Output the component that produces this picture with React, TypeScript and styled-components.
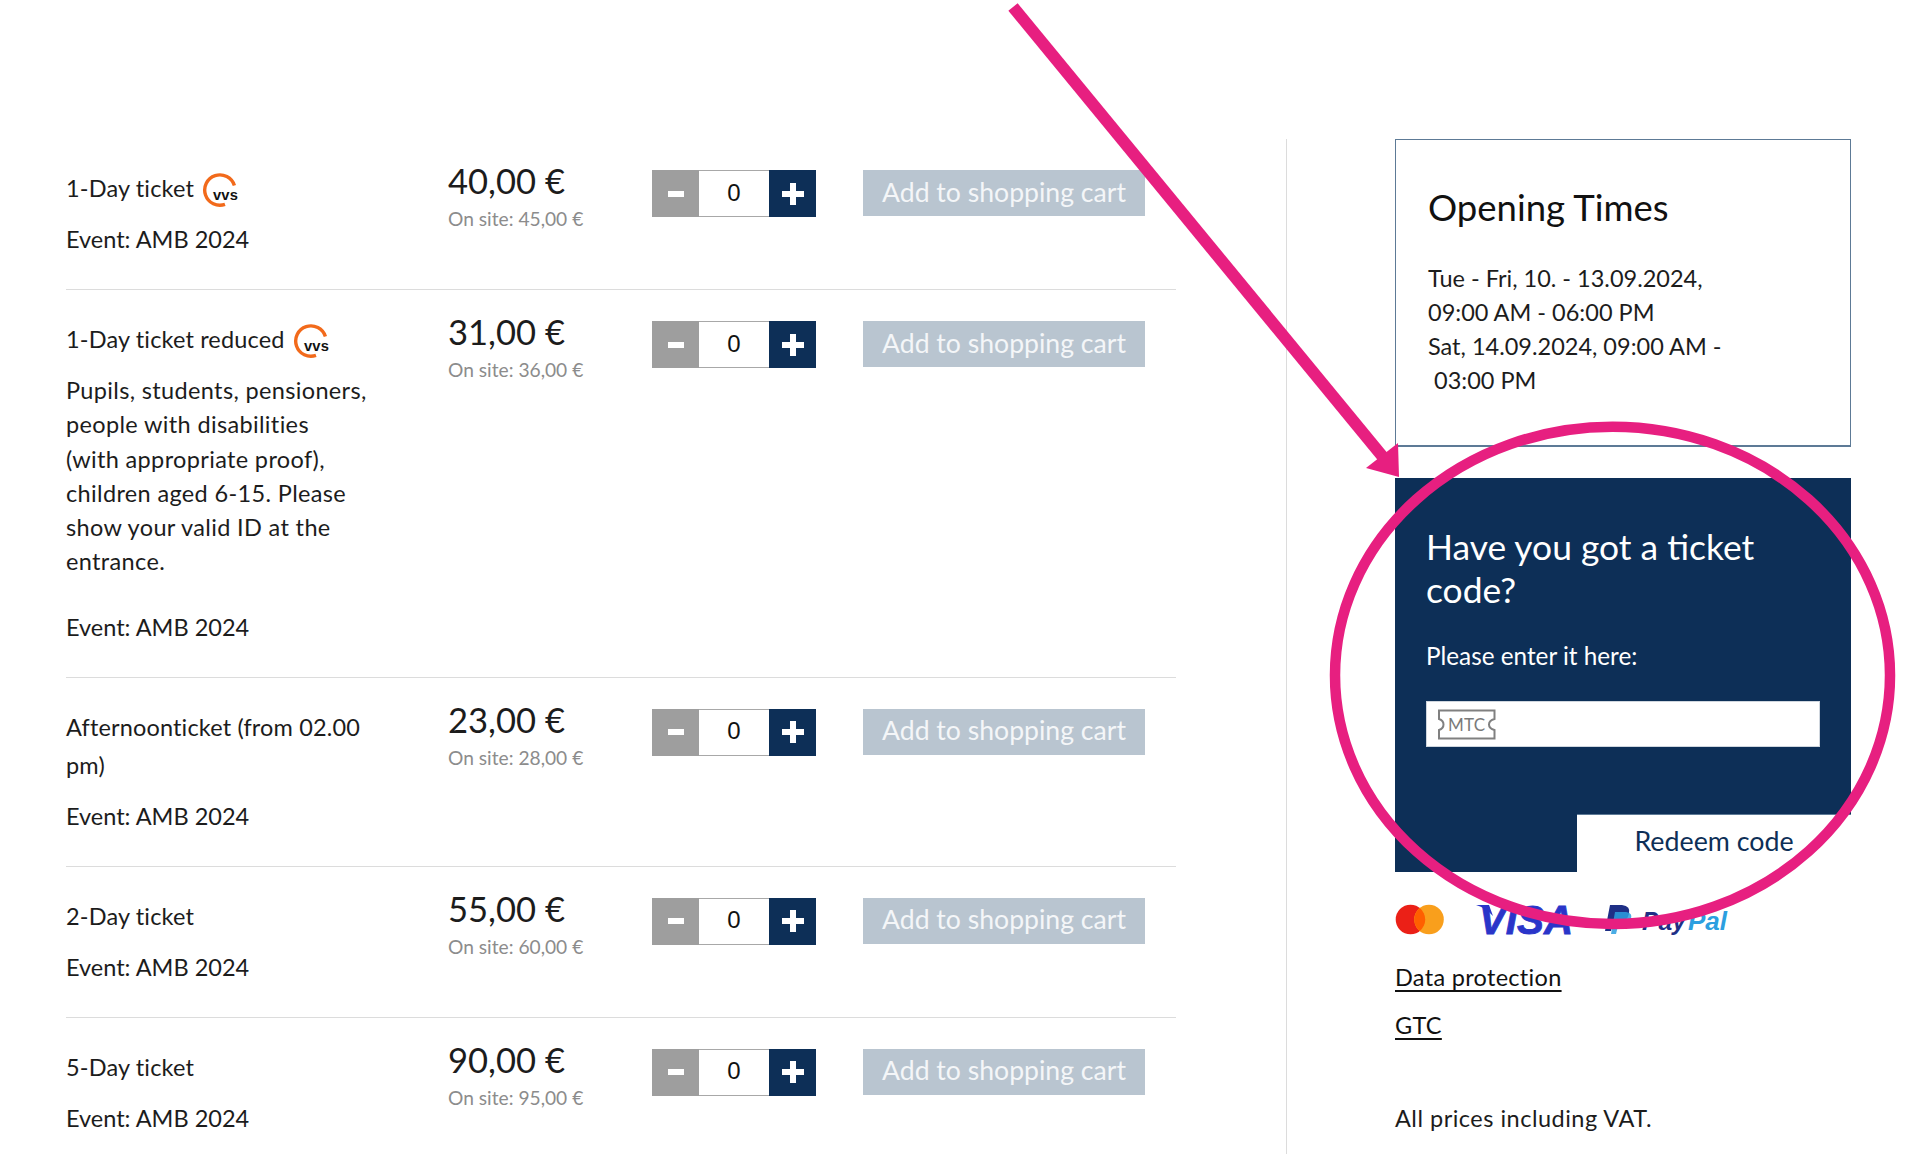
import React from "react";
import styled, { createGlobalStyle } from "styled-components";

const Global = createGlobalStyle`
  html, body { margin: 0; padding: 0; height: 1154px; overflow: hidden; background: #fff; }
  #root { height: 1154px; }
  * { box-sizing: border-box; }
`;

const Page = styled.div`
  position: relative;
  width: 1920px;
  height: 1154px;
  overflow: hidden;
  padding: 139px 0 0 66px;
  display: flex;
  align-items: stretch;
  font-family: Lato, "Liberation Sans", sans-serif;
  font-size: 23.5px;
  line-height: 34px;
  color: #1c1c1c;
`;

const Main = styled.main`
  width: 1110px;
  margin-right: 110px;
  flex: none;
`;

const Row = styled.section`
  display: grid;
  grid-template-columns: 382px 204px 211px 1fr;
  padding: 20px 0 33px;
  border-bottom: 1px solid #dcdcdc;
`;

const Info = styled.div`
  padding-top: 10px;
`;

const Title = styled.div`
  line-height: 38px;
  margin-bottom: 15px;
  letter-spacing: 0.15px;
`;

const Desc = styled.p`
  margin: 0 0 31px;
  line-height: 34.3px;
  letter-spacing: 0.35px;
`;

const Price = styled.div`
  font-size: 34.6px;
  line-height: 44px;
`;

const OnSite = styled.div`
  font-size: 19.2px;
  line-height: 32px;
  color: #8c8c8c;
`;

const Stepper = styled.div`
  display: flex;
  width: 164px;
  height: 47px;
  margin-top: 11px;
`;

const StepButton = styled.button<{ $plus?: boolean }>`
  width: 47px;
  height: 47px;
  padding: 0;
  border: 0;
  border-radius: 0;
  display: flex;
  align-items: center;
  justify-content: center;
  background: ${(p) => (p.$plus ? "#0d2f57" : "#9e9e9e")};
`;

const QtyInput = styled.input`
  width: 70px;
  height: 47px;
  border: 0;
  border-top: 1px solid #a8a8a8;
  border-bottom: 1px solid #a8a8a8;
  border-radius: 0;
  background: #fff;
  padding: 0 0 2px;
  outline: 0;
  text-align: center;
  font-family: "Liberation Sans", Arial, sans-serif;
  font-size: 24px;
  color: #111;
`;

const AddButton = styled.button`
  width: 282px;
  height: 46px;
  margin-top: 11px;
  padding: 0 0 3px;
  border: 0;
  border-radius: 0;
  background: #b9c5d0;
  color: #f4f6f8;
  font-family: inherit;
  font-size: 26.6px;
  line-height: 40px;
`;

const Sidebar = styled.aside`
  width: 565px;
  flex: none;
  border-left: 1px solid #dcdcdc;
  padding-left: 108px;
`;

const HoursCard = styled.div`
  height: 308px;
  border: 1px solid #5d7a96;
  border-bottom-width: 2px;
  padding: 46px 30px 0 32px;
`;

const CardTitle = styled.h2`
  margin: 0 0 33px;
  font-size: 36.5px;
  line-height: 42px;
  font-weight: 400;
  color: #111;
`;

const CodeCard = styled.div`
  margin-top: 31px;
  height: 394px;
  background: #0d2f57;
  color: #fff;
  display: flex;
  flex-direction: column;
  padding: 47px 0 0 31px;
`;

const CodeTitle = styled.h2`
  margin: 0 0 28px;
  font-size: 35.4px;
  line-height: 43px;
  font-weight: 400;
`;

const CodeHint = styled.div`
  margin-bottom: 28px;
  font-size: 24.3px;
`;

const CodeField = styled.div`
  width: 394px;
  height: 46px;
  background: #fff;
  border: 1px solid #cfd6de;
  padding: 7px 0 0 11px;
  display: flex;
  align-items: flex-start;
`;

const RedeemButton = styled.button`
  align-self: flex-end;
  width: 274px;
  height: 58px;
  margin-top: 67px;
  padding: 0 0 5px;
  border: 0;
  border-top: 1px solid #5d7a96;
  border-radius: 0;
  background: #fff;
  color: #0d2f57;
  font-family: inherit;
  font-size: 26.8px;
`;

const Payments = styled.div`
  margin: 32px 0 25px;
  height: 31px;
  display: flex;
  align-items: flex-start;
`;

const VisaSlot = styled.div`
  margin: 0 22px 0 31px;
  height: 31px;
`;

const LegalLink = styled.a`
  display: block;
  margin-bottom: 14px;
  color: #111;
  letter-spacing: 0.3px;
  text-decoration: underline;
  text-underline-offset: 4px;
`;

const Vat = styled.div`
  margin-top: 59px;
  letter-spacing: 0.5px;
`;

const Annotation = styled.svg`
  position: absolute;
  left: 0;
  top: 0;
  pointer-events: none;
`;

const TitleIcon = styled.svg`
  vertical-align: -3px;
  margin: -8px 0 -8px 7px;
`;

const VvsIcon = () => (
  <TitleIcon width="38" height="35" viewBox="0 0 38 35">
    <path d="M33.4 12.5 A15.2 15.2 0 1 0 24 31.4" fill="none" stroke="#f26a1b" strokeWidth="3.4" />
    <text x="12" y="27" fontFamily="'Liberation Sans', Arial, sans-serif" fontWeight="700" fontSize="15" fill="#111" textLength="25" lengthAdjust="spacingAndGlyphs">vvs</text>
  </TitleIcon>
);

const TicketIcon = () => (
  <svg width="58" height="31" viewBox="0 0 58 31">
    <path
      d="M1 1.5 H56.5 V10 Q51 11.5 51 15.5 Q51 19.5 56.5 21 V29.5 H1 V21 Q5.5 19.5 5.5 15.5 Q5.5 11.5 1 10 Z"
      fill="none"
      stroke="#808080"
      strokeWidth="2"
    />
    <text x="10" y="21.5" fontFamily="Lato, sans-serif" fontSize="17" fill="#7a7a7a" textLength="37">MTC</text>
  </svg>
);

const MasterCard = () => (
  <svg width="50" height="31" viewBox="0 0 50 31">
    <circle cx="15.5" cy="15.5" r="14.8" fill="#eb2017" />
    <circle cx="34" cy="15.5" r="14.8" fill="#f99f1c" />
    <path d="M24.75 4 A14.8 14.8 0 0 1 24.75 27 A14.8 14.8 0 0 1 24.75 4 Z" fill="#ff5f00" />
  </svg>
);

const VisaLogo = () => (
  <svg width="106" height="34" viewBox="0 0 106 34">
    <path d="M0 1 H13 L17 12 Q10 4 0 1 Z" fill="#2a35c9" />
    <text x="3" y="30" fontFamily="'Liberation Sans', Arial, sans-serif" fontWeight="700" fontStyle="italic" fontSize="41" fill="#2a35c9" stroke="#2a35c9" strokeWidth="0.8" textLength="94" lengthAdjust="spacingAndGlyphs">VISA</text>
  </svg>
);

const PayPalLogo = () => (
  <svg width="126" height="31" viewBox="0 0 126 31">
    <path d="M6 1 H18 Q27 2 25 10 Q23 18 14 18 H9 L7 27 H1 Z" fill="#1f2f86" />
    <path d="M11 8 H22 Q29 9 27 15 Q25 22 17 22 H14 L12 30 H7 Z" fill="#2c9fe0" opacity="0.85" />
    <text x="38" y="26" fontFamily="'Liberation Sans', Arial, sans-serif" fontWeight="700" fontStyle="italic" fontSize="25" fill="#1f2f86" textLength="44" lengthAdjust="spacingAndGlyphs">Pay</text>
    <text x="84" y="26" fontFamily="'Liberation Sans', Arial, sans-serif" fontWeight="700" fontStyle="italic" fontSize="25" fill="#2c9fe0" textLength="39" lengthAdjust="spacingAndGlyphs">Pal</text>
  </svg>
);

const PlusGlyph = () => (
  <svg width="24" height="24" viewBox="0 0 24 24">
    <path d="M9 1 H15 V9 H23 V15 H15 V23 H9 V15 H1 V9 H9 Z" fill="#fff" />
  </svg>
);

const MinusGlyph = () => (
  <svg width="16" height="6" viewBox="0 0 16 6">
    <rect width="16" height="6" fill="#fff" />
  </svg>
);

const tickets = [
  { name: "1-Day ticket", vvs: true, price: "40,00 €", site: "45,00 €" },
  {
    name: "1-Day ticket reduced",
    vvs: true,
    price: "31,00 €",
    site: "36,00 €",
    desc: ["Pupils, students, pensioners,", "people with disabilities", "(with appropriate proof),", "children aged 6-15. Please", "show your valid ID at the", "entrance."],
  },
  { name: ["Afternoonticket (from 02.00", "pm)"], price: "23,00 €", site: "28,00 €" },
  { name: "2-Day ticket", price: "55,00 €", site: "60,00 €" },
  { name: "5-Day ticket", price: "90,00 €", site: "95,00 €" },
];

const Lines = ({ items }: { items: string[] }) => (
  <>
    {items.map((l, i) => (
      <React.Fragment key={i}>
        {i > 0 && <br />}
        {l}
      </React.Fragment>
    ))}
  </>
);

export default function App() {
  return (
    <Page>
      <Global />
      <Main>
        {tickets.map((t, i) => (
          <Row key={i}>
            <Info>
              <Title>
                {Array.isArray(t.name) ? <Lines items={t.name} /> : t.name}
                {t.vvs && <VvsIcon />}
              </Title>
              {t.desc && (
                <Desc>
                  <Lines items={t.desc} />
                </Desc>
              )}
              <div>Event: AMB 2024</div>
            </Info>
            <div>
              <Price>{t.price}</Price>
              <OnSite>On site: {t.site}</OnSite>
            </div>
            <Stepper>
              <StepButton aria-label="minus"><MinusGlyph /></StepButton>
              <QtyInput readOnly value="0" />
              <StepButton $plus aria-label="plus"><PlusGlyph /></StepButton>
            </Stepper>
            <AddButton>Add to shopping cart</AddButton>
          </Row>
        ))}
      </Main>
      <Sidebar>
        <HoursCard>
          <CardTitle>Opening Times</CardTitle>
          <div>
            Tue - Fri, 10. - 13.09.2024,
            <br />
            09:00 AM - 06:00 PM
            <br />
            Sat, 14.09.2024, 09:00 AM -
            <br />
            &nbsp;03:00 PM
          </div>
        </HoursCard>
        <CodeCard>
          <CodeTitle>
            Have you got a ticket
            <br />
            code?
          </CodeTitle>
          <CodeHint>Please enter it here:</CodeHint>
          <CodeField>
            <TicketIcon />
          </CodeField>
          <RedeemButton>Redeem code</RedeemButton>
        </CodeCard>
        <Payments>
          <MasterCard />
          <VisaSlot><VisaLogo /></VisaSlot>
          <PayPalLogo />
        </Payments>
        <LegalLink href="#">Data protection</LegalLink>
        <LegalLink href="#">GTC</LegalLink>
        <Vat>All prices including VAT.</Vat>
      </Sidebar>
      <Annotation width="1920" height="1154" viewBox="0 0 1920 1154">
        <ellipse cx="1612.5" cy="675.3" rx="277.5" ry="248.6" fill="none" stroke="#e71f80" strokeWidth="10.5" />
        <line x1="1013" y1="7" x2="1392" y2="468" stroke="#e71f80" strokeWidth="12" />
        <polygon points="1398,443 1366,468 1399,477" fill="#e71f80" />
      </Annotation>
    </Page>
  );
}
